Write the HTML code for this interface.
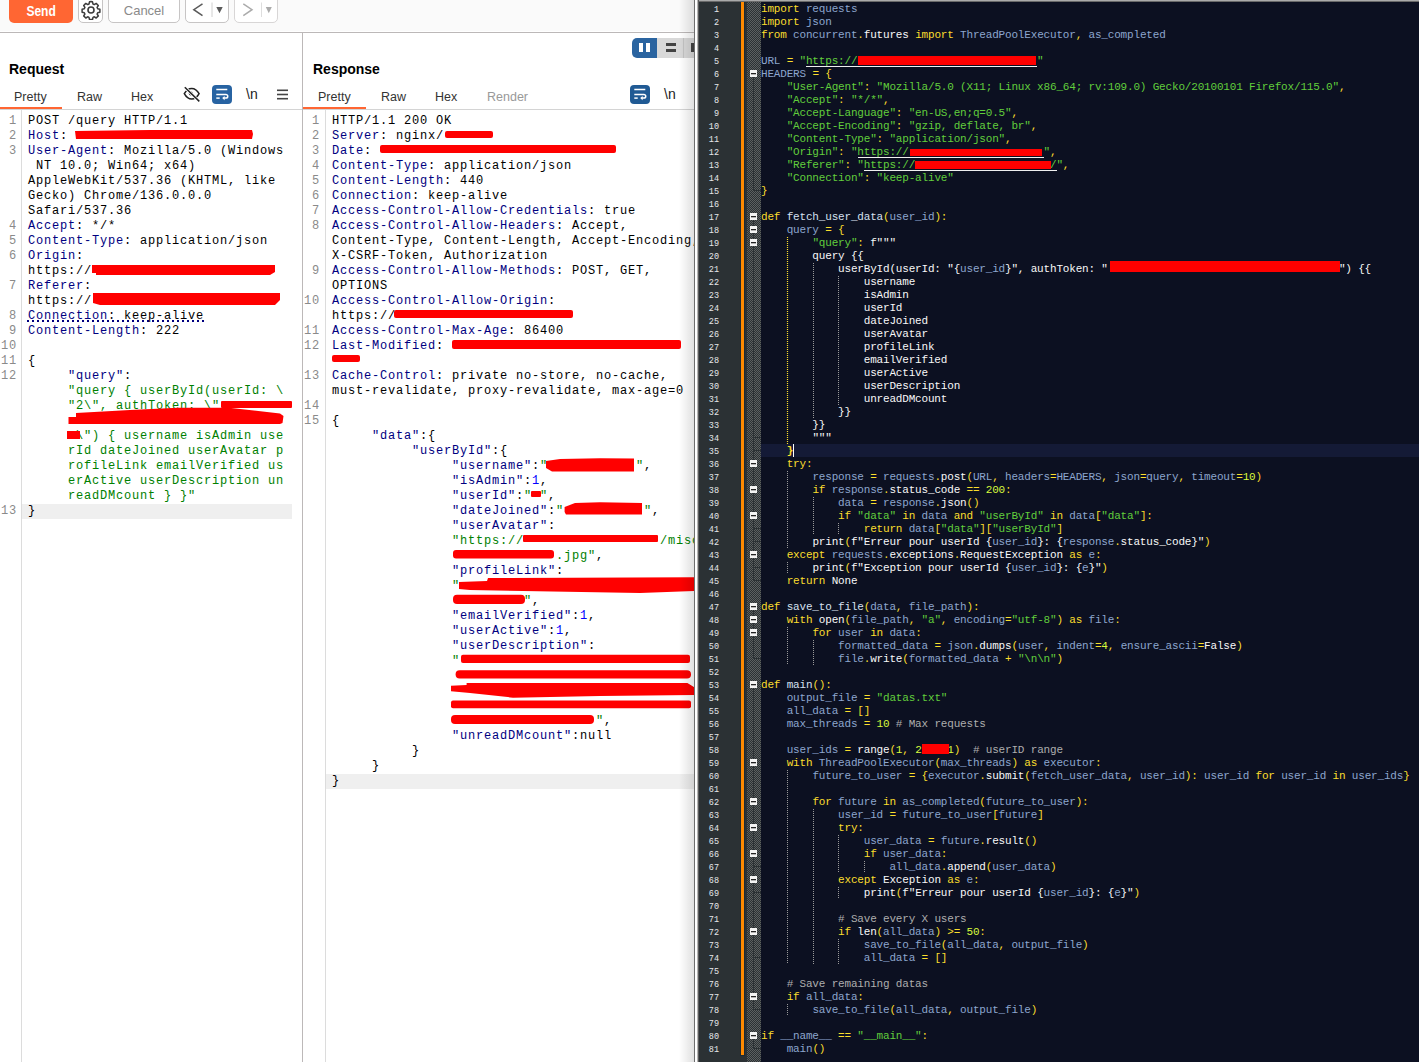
<!DOCTYPE html>
<html><head><meta charset="utf-8">
<style>
*{margin:0;padding:0;box-sizing:border-box}
html,body{width:1419px;height:1062px;overflow:hidden;background:#fff;position:relative}
body{font-family:"Liberation Sans",sans-serif}
.a{position:absolute}
svg{display:block}
#tb{left:0;top:0;width:1419px;background:linear-gradient(#fafafa 0,#fafafa 31px,#fff 31px,#fff 32px);border-bottom:1px solid #bcb8b8;height:33px}
.btn{position:absolute;top:-6px;height:29px;border:1px solid #c7c5c5;border-radius:5px;background:#fff}
.send{left:9px;width:64px;background:#ff6633;border:none;color:#fff;font:bold 14px "Liberation Sans",sans-serif;text-align:center;line-height:35px}
.hd{font:bold 14px "Liberation Sans",sans-serif;color:#000}
.tab{font:12.5px "Liberation Sans",sans-serif;color:#333}
.ed{font:12px "Liberation Mono",monospace;letter-spacing:0.8px;line-height:15px;white-space:pre;color:#000}
.ln{font:12px "Liberation Mono",monospace;letter-spacing:0.8px;line-height:15px;white-space:pre;color:#8a8a8a;text-align:right;width:16px}
.K{color:#000080}.G{color:#008000}.N{color:#0000ff}
.red{position:absolute;background:#ff0000;border-radius:3px}
#np{left:694px;top:0;width:725px;height:1062px;background:#0c1021;overflow:hidden}
.code{font:11px "Liberation Mono",monospace;letter-spacing:-0.18px;line-height:13px;white-space:pre;color:#f8f8f8}
.code b{font-weight:normal}
b.k{color:#fbde2d}b.i{color:#8da6ce}b.s{color:#61ce3c}b.n{color:#d8fa3c}b.w{color:#f8f8f8}b.c{color:#aeaeae}b.d{color:#d6e0f0}
.nln{font:8.5px "Liberation Mono",monospace;line-height:13px;white-space:pre;color:#e6e8ea;text-align:right}
</style></head><body>
<!-- toolbar -->
<div id="tb" class="a">
  <div class="btn send"><span style="display:inline-block;transform:scaleX(0.86)">Send</span></div>
  <div class="btn" style="left:78px;width:25px"><svg class="a" style="left:2px;top:5px" width="20" height="20" viewBox="0 0 20 20"><path d="M10 1.6l1.5.2.5 2.2 1.3.6 1.9-1.2 2.1 2.1-1.2 1.9.6 1.3 2.2.5v3l-2.2.5-.6 1.3 1.2 1.9-2.1 2.1-1.9-1.2-1.3.6-.5 2.2h-3l-.5-2.2-1.3-.6-1.9 1.2-2.1-2.1 1.2-1.9-.6-1.3-2.2-.5v-3l2.2-.5.6-1.3-1.2-1.9 2.1-2.1 1.9 1.2 1.3-.6.5-2.2z" fill="none" stroke="#3c3c3c" stroke-width="1.5" stroke-linejoin="round"/><circle cx="10" cy="10" r="3" fill="none" stroke="#3c3c3c" stroke-width="1.6"/></svg></div>
  <div class="btn" style="left:108px;width:72px;text-align:center;font:13px 'Liberation Sans',sans-serif;color:#8a8a8a;line-height:31px">Cancel</div>
  <div class="btn" style="left:185px;width:44px"><svg class="a" style="left:0;top:6px" width="44" height="18"><path d="M16.5 2.8L7.8 8.7 16.5 14.6" fill="none" stroke="#5a5a5a" stroke-width="1.5"/><line x1="26" y1="1.5" x2="26" y2="16" stroke="#d0d0d0" stroke-width="1"/><path d="M30.3 6h6.4l-3.2 6.2z" fill="#5a5a5a"/></svg></div>
  <div class="btn" style="left:234px;width:44px;border-color:#d8d6d6"><svg class="a" style="left:0;top:6px" width="44" height="18"><path d="M8.3 2.8L17 8.7 8.3 14.6" fill="none" stroke="#ababab" stroke-width="1.5"/><line x1="26.5" y1="1.5" x2="26.5" y2="16" stroke="#dedede" stroke-width="1"/><path d="M30.8 6h6l-3 6.2z" fill="#ababab"/></svg></div>
</div>
<!-- request -->
<div class="a hd" style="left:9px;top:61px">Request</div>
<div class="a tab" style="left:14px;top:90px">Pretty</div>
<div class="a tab" style="left:77px;top:90px">Raw</div>
<div class="a tab" style="left:131px;top:90px">Hex</div>
<div class="a" style="left:183px;top:86px"><svg width="17" height="16" viewBox="0 0 17 16"><path d="M1.3 7.7C3.5 3.7 6 2.4 8.7 2.4S13.9 3.7 16.1 7.7C13.9 11.7 11.4 13.1 8.7 13.1S3.5 11.7 1.3 7.7z" fill="none" stroke="#222" stroke-width="1.5"/><circle cx="7.8" cy="7.6" r="2" fill="#222"/><line x1="1.8" y1="1.3" x2="16.3" y2="15.4" stroke="#fff" stroke-width="3"/><line x1="1.8" y1="1.3" x2="16.3" y2="15.4" stroke="#222" stroke-width="1.5"/></svg></div>
<div class="a" style="left:212px;top:85px"><svg width="20" height="19" viewBox="0 0 20 19"><rect x="0" y="0" width="20" height="19" rx="4" fill="#2763a2"/><path d="M4.3 4.5h11M4.3 9.4h9.6a1.85 1.85 0 0 1 0 3.7H12" fill="none" stroke="#fff" stroke-width="1.5"/><path d="M4.3 13.1h3.4" stroke="#fff" stroke-width="1.5"/><path d="M12.6 11l-2.4 2.1 2.4 2.1z" fill="#fff"/></svg></div>
<div class="a" style="left:246px;top:86px;font:14px 'Liberation Sans',sans-serif;color:#222">\n</div>
<div class="a" style="left:277px;top:89px"><svg width="11" height="11"><rect x="0" y="0.5" width="11" height="1.6" fill="#444"/><rect x="0" y="4.7" width="11" height="1.6" fill="#444"/><rect x="0" y="8.9" width="11" height="1.6" fill="#444"/></svg></div>
<div class="a" style="left:0;top:107px;width:62px;height:2px;background:#ff6633"></div>
<div class="a" style="left:0;top:109px;width:302px;height:1px;background:#d4d4d4"></div>
<div class="a" style="left:21px;top:110px;width:1px;height:952px;background:#dcdcdc"></div>
<div class="a" style="left:22px;top:504px;width:270px;height:15px;background:#efefef"></div>
<div class="a" style="left:27px;top:320px;width:179px;height:2px;background:repeating-linear-gradient(to right,#000080 0,#000080 2px,transparent 2px,transparent 5px)"></div>
<div class="a ln" style="left:1px;top:113.6px">1
2
3




4
5
6

7

8
9
10
11
12








13</div>
<div class="a ed" style="left:28px;top:113.6px">POST /query HTTP/1.1
<span class=K>Host</span>:
<span class=K>User-Agent</span>: Mozilla/5.0 (Windows
 NT 10.0; Win64; x64)
AppleWebKit/537.36 (KHTML, like
Gecko) Chrome/136.0.0.0
Safari/537.36
<span class=K>Accept</span>: */*
<span class=K>Content-Type</span>: application/json
<span class=K>Origin</span>:
https://
<span class=K>Referer</span>:
https://
<span class=K>Connection</span>: keep-alive
<span class=K>Content-Length</span>: 222

{
     <span class=K>"query"</span>:
     <span class=G>"query { userById(userId: \</span>
     <span class=G>"2\", authToken: \"</span>

     <span class=G> \") { username isAdmin use</span>
     <span class=G>rId dateJoined userAvatar p</span>
     <span class=G>rofileLink emailVerified us</span>
     <span class=G>erActive userDescription un</span>
     <span class=G>readDMcount } }"</span>
}</div>
<div class="a" style="left:302px;top:33px;width:1px;height:1029px;background:#bcb8b8"></div>
<!-- response -->
<div class="a hd" style="left:313px;top:61px">Response</div>
<div class="a tab" style="left:318px;top:90px">Pretty</div>
<div class="a tab" style="left:381px;top:90px">Raw</div>
<div class="a tab" style="left:435px;top:90px">Hex</div>
<div class="a tab" style="left:487px;top:90px;color:#999">Render</div>
<div class="a" style="left:632px;top:38px;width:25px;height:20px;background:#2a64a0;border-radius:5px 0 0 5px"></div>
<div class="a" style="left:639px;top:43px;width:4px;height:9px;background:#fff"></div>
<div class="a" style="left:646px;top:43px;width:4px;height:9px;background:#fff"></div>
<div class="a" style="left:657px;top:38px;width:40px;height:20px;background:#d9d9d9"></div>
<div class="a" style="left:683px;top:38px;width:1px;height:20px;background:#c4c4c4"></div>
<div class="a" style="left:666px;top:43px;width:10px;height:3px;background:#444"></div>
<div class="a" style="left:666px;top:49px;width:10px;height:3px;background:#444"></div>
<div class="a" style="left:691px;top:43px;width:4px;height:9px;background:#444"></div>
<div class="a" style="left:630px;top:85px"><svg width="20" height="19" viewBox="0 0 20 19"><rect x="0" y="0" width="20" height="19" rx="4" fill="#205a94"/><path d="M4.3 4.5h11M4.3 9.4h9.6a1.85 1.85 0 0 1 0 3.7H12" fill="none" stroke="#fff" stroke-width="1.5"/><path d="M4.3 13.1h3.4" stroke="#fff" stroke-width="1.5"/><path d="M12.6 11l-2.4 2.1 2.4 2.1z" fill="#fff"/></svg></div>
<div class="a" style="left:664px;top:86px;font:14px 'Liberation Sans',sans-serif;color:#222">\n</div>
<div class="a" style="left:303px;top:107px;width:63px;height:2px;background:#ff6633"></div>
<div class="a" style="left:303px;top:109px;width:400px;height:1px;background:#d4d4d4"></div>
<div class="a" style="left:325px;top:110px;width:1px;height:952px;background:#dcdcdc"></div>
<div class="a" style="left:326px;top:774px;width:380px;height:15px;background:#efefef"></div>
<div class="a ln" style="left:304px;top:113.6px">1
2
3
4
5
6
7
8


9

10

11
12

13

14
15























</div>
<div class="a ed" style="left:332px;top:113.6px">HTTP/1.1 200 OK
<span class=K>Server</span>: nginx/
<span class=K>Date</span>:
<span class=K>Content-Type</span>: application/json
<span class=K>Content-Length</span>: 440
<span class=K>Connection</span>: keep-alive
<span class=K>Access-Control-Allow-Credentials</span>: true
<span class=K>Access-Control-Allow-Headers</span>: Accept,
Content-Type, Content-Length, Accept-Encoding,
X-CSRF-Token, Authorization
<span class=K>Access-Control-Allow-Methods</span>: POST, GET,
OPTIONS
<span class=K>Access-Control-Allow-Origin</span>:
https://
<span class=K>Access-Control-Max-Age</span>: 86400
<span class=K>Last-Modified</span>:

<span class=K>Cache-Control</span>: private no-store, no-cache,
must-revalidate, proxy-revalidate, max-age=0

{
     <span class=K>"data"</span>:{
          <span class=K>"userById"</span>:{
               <span class=K>"username"</span>:<span class=G>"           "</span>,
               <span class=K>"isAdmin"</span>:<span class=N>1</span>,
               <span class=K>"userId"</span>:<span class=G>" "</span>,
               <span class=K>"dateJoined"</span>:<span class=G>"          "</span>,
               <span class=K>"userAvatar"</span>:
               <span class=G>"https://                 /misc</span>
               <span class=G>             .jpg"</span>,
               <span class=K>"profileLink"</span>:
               <span class=G>"</span>
               <span class=G>         "</span>,
               <span class=K>"emailVerified"</span>:<span class=N>1</span>,
               <span class=K>"userActive"</span>:<span class=N>1</span>,
               <span class=K>"userDescription"</span>:
               <span class=G>"</span>



               <span class=G>                  "</span>,
               <span class=K>"unreadDMcount"</span>:null
          }
     }
}</div>
<svg class="a" style="left:0;top:0" width="700" height="1062" fill="#ff0000"><path d="M75,131 L150,130 L252,130 L253,134 L252,139 L180,139 L76,139Z"/><path d="M92,265 L275,265 L275,272 L270,275 L96,275 L96,273 L92,273Z"/><path d="M93,293 L280,293 L280,300 L275,305 L100,305 L93,303Z"/><rect x="221" y="401" width="71" height="7" rx="1"/><path d="M68.5,417 L76,417 L76,413 L130,410 L178,407.7 L229,407.7 L280,413.5 L283.5,416 L282.5,423 L280,424 L68.5,424Z"/><rect x="67" y="431" width="13" height="8" rx="0"/><rect x="445" y="131" width="48" height="7" rx="2"/><rect x="380" y="145" width="236" height="8" rx="2"/><rect x="394" y="310" width="179" height="8" rx="2"/><rect x="452" y="340" width="229" height="9" rx="2"/><rect x="332" y="355" width="28" height="7" rx="2"/><path d="M546,461 L560,459 L600,458.2 L634,458.5 L634,471.5 L552,471.5 L546,468Z"/><rect x="531" y="491" width="10" height="6" rx="1"/><path d="M564.6,507 L575,503 L600,502.2 L642,503 L642,514.5 L566,514.5 L564.6,512Z"/><rect x="523" y="535" width="135" height="7" rx="1"/><rect x="453" y="550" width="101" height="8.5" rx="3"/><path d="M459,582 L487,581 L488,578 L694,577.3 L694,591 L640,592.9 L470,590 L459,589Z"/><rect x="453" y="594.7" width="72" height="9.199999999999932" rx="4"/><rect x="461" y="654.7" width="229" height="8.299999999999955" rx="2"/><rect x="455.6" y="670.2" width="235.39999999999998" height="8.299999999999955" rx="4"/><path d="M451,685.8 L466.6,685 L466.6,683 L687.4,683 L694.7,687.6 L694.7,695 L600,696 L513,697.7 L470,693 L451,691.3Z"/><rect x="451" y="700.5" width="240" height="7.7000000000000455" rx="2"/><rect x="451" y="715.1" width="143" height="8.799999999999955" rx="4"/></svg>
<div class="a" style="left:679px;top:0;width:15px;height:1062px;background:linear-gradient(to right,rgba(0,0,0,0),rgba(0,0,0,0.12))"></div>
<!-- notepad++ -->
<div id="np" class="a">
<div class="a" style="left:0;top:0;width:1px;height:1062px;background:#6e6e6e"></div>
<div class="a" style="left:1px;top:0;width:2px;height:1062px;background:#fff"></div>
<div class="a" style="left:3px;top:0;width:1px;height:1062px;background:#b4b4b4"></div>
<div class="a" style="left:4px;top:0;width:1px;height:1062px;background:#5a5a5a"></div>
<div class="a" style="left:5px;top:0;width:62px;height:1062px;background:#2b3134"></div>
<div class="a" style="left:46px;top:2px;width:1px;height:1054px;background:#1d2a33"></div>
<div class="a" style="left:47px;top:2px;width:3px;height:1053px;background:#ff8a00"></div>
<div class="a" style="left:50px;top:2px;width:1px;height:1054px;background:#1d2a33"></div>
<div class="a" style="left:47px;top:1055px;width:3px;height:1px;background:#1d2a33"></div>
<div class="a" style="left:53px;top:2px;width:14px;height:1060px;background:repeating-conic-gradient(#5c6060 0 25%,#2b3134 0 50%) 0 0/2px 2px"></div>
<svg class="a" style="left:53px;top:0" width="14" height="1062"><rect x="6" y="77" width="1" height="114" fill="#2b3134"/><rect x="7" y="190" width="7" height="1" fill="#2b3134"/><rect x="6" y="220" width="1" height="361" fill="#2b3134"/><rect x="7" y="580" width="7" height="1" fill="#2b3134"/><rect x="6" y="233" width="1" height="218" fill="#2b3134"/><rect x="7" y="450" width="7" height="1" fill="#2b3134"/><rect x="6" y="246" width="1" height="192" fill="#2b3134"/><rect x="7" y="437" width="7" height="1" fill="#2b3134"/><rect x="6" y="467" width="1" height="75" fill="#2b3134"/><rect x="7" y="541" width="7" height="1" fill="#2b3134"/><rect x="6" y="493" width="1" height="36" fill="#2b3134"/><rect x="7" y="528" width="7" height="1" fill="#2b3134"/><rect x="6" y="519" width="1" height="10" fill="#2b3134"/><rect x="7" y="528" width="7" height="1" fill="#2b3134"/><rect x="6" y="558" width="1" height="10" fill="#2b3134"/><rect x="7" y="567" width="7" height="1" fill="#2b3134"/><rect x="6" y="610" width="1" height="49" fill="#2b3134"/><rect x="7" y="658" width="7" height="1" fill="#2b3134"/><rect x="6" y="623" width="1" height="36" fill="#2b3134"/><rect x="7" y="658" width="7" height="1" fill="#2b3134"/><rect x="6" y="636" width="1" height="23" fill="#2b3134"/><rect x="7" y="658" width="7" height="1" fill="#2b3134"/><rect x="6" y="688" width="1" height="322" fill="#2b3134"/><rect x="7" y="1009" width="7" height="1" fill="#2b3134"/><rect x="6" y="766" width="1" height="192" fill="#2b3134"/><rect x="7" y="957" width="7" height="1" fill="#2b3134"/><rect x="6" y="805" width="1" height="153" fill="#2b3134"/><rect x="7" y="957" width="7" height="1" fill="#2b3134"/><rect x="6" y="831" width="1" height="36" fill="#2b3134"/><rect x="7" y="866" width="7" height="1" fill="#2b3134"/><rect x="6" y="857" width="1" height="10" fill="#2b3134"/><rect x="7" y="866" width="7" height="1" fill="#2b3134"/><rect x="6" y="883" width="1" height="10" fill="#2b3134"/><rect x="7" y="892" width="7" height="1" fill="#2b3134"/><rect x="6" y="935" width="1" height="23" fill="#2b3134"/><rect x="7" y="957" width="7" height="1" fill="#2b3134"/><rect x="6" y="1000" width="1" height="10" fill="#2b3134"/><rect x="7" y="1009" width="7" height="1" fill="#2b3134"/><rect x="6" y="1039" width="1" height="10" fill="#2b3134"/><rect x="7" y="1048" width="7" height="1" fill="#2b3134"/><rect x="3" y="70" width="7" height="7" fill="#f4f4f4"/><rect x="4" y="73" width="5" height="1.3" fill="#222"/><rect x="3" y="213" width="7" height="7" fill="#f4f4f4"/><rect x="4" y="216" width="5" height="1.3" fill="#222"/><rect x="3" y="226" width="7" height="7" fill="#f4f4f4"/><rect x="4" y="229" width="5" height="1.3" fill="#222"/><rect x="3" y="239" width="7" height="7" fill="#f4f4f4"/><rect x="4" y="242" width="5" height="1.3" fill="#222"/><rect x="3" y="460" width="7" height="7" fill="#f4f4f4"/><rect x="4" y="463" width="5" height="1.3" fill="#222"/><rect x="3" y="486" width="7" height="7" fill="#f4f4f4"/><rect x="4" y="489" width="5" height="1.3" fill="#222"/><rect x="3" y="512" width="7" height="7" fill="#f4f4f4"/><rect x="4" y="515" width="5" height="1.3" fill="#222"/><rect x="3" y="551" width="7" height="7" fill="#f4f4f4"/><rect x="4" y="554" width="5" height="1.3" fill="#222"/><rect x="3" y="603" width="7" height="7" fill="#f4f4f4"/><rect x="4" y="606" width="5" height="1.3" fill="#222"/><rect x="3" y="616" width="7" height="7" fill="#f4f4f4"/><rect x="4" y="619" width="5" height="1.3" fill="#222"/><rect x="3" y="629" width="7" height="7" fill="#f4f4f4"/><rect x="4" y="632" width="5" height="1.3" fill="#222"/><rect x="3" y="681" width="7" height="7" fill="#f4f4f4"/><rect x="4" y="684" width="5" height="1.3" fill="#222"/><rect x="3" y="759" width="7" height="7" fill="#f4f4f4"/><rect x="4" y="762" width="5" height="1.3" fill="#222"/><rect x="3" y="798" width="7" height="7" fill="#f4f4f4"/><rect x="4" y="801" width="5" height="1.3" fill="#222"/><rect x="3" y="824" width="7" height="7" fill="#f4f4f4"/><rect x="4" y="827" width="5" height="1.3" fill="#222"/><rect x="3" y="850" width="7" height="7" fill="#f4f4f4"/><rect x="4" y="853" width="5" height="1.3" fill="#222"/><rect x="3" y="876" width="7" height="7" fill="#f4f4f4"/><rect x="4" y="879" width="5" height="1.3" fill="#222"/><rect x="3" y="928" width="7" height="7" fill="#f4f4f4"/><rect x="4" y="931" width="5" height="1.3" fill="#222"/><rect x="3" y="993" width="7" height="7" fill="#f4f4f4"/><rect x="4" y="996" width="5" height="1.3" fill="#222"/><rect x="3" y="1032" width="7" height="7" fill="#f4f4f4"/><rect x="4" y="1035" width="5" height="1.3" fill="#222"/></svg>
<div class="a" style="left:5px;top:0;width:720px;height:1px;background:#aaa"></div>
<div class="a" style="left:5px;top:1px;width:720px;height:1px;background:#6a6a6a"></div>
<div class="a" style="left:67px;top:444px;width:700px;height:13px;background:#141a36"></div>
<svg class="a" style="left:0;top:0" width="725" height="1062"><line x1="93.5" y1="236" x2="93.5" y2="444" stroke="#9a9a9a" stroke-width="1" stroke-dasharray="1 1" stroke-dashoffset="1"/><line x1="93.5" y1="470" x2="93.5" y2="548" stroke="#9a9a9a" stroke-width="1" stroke-dasharray="1 1" stroke-dashoffset="1"/><line x1="93.5" y1="561" x2="93.5" y2="574" stroke="#9a9a9a" stroke-width="1" stroke-dasharray="1 1" stroke-dashoffset="1"/><line x1="93.5" y1="626" x2="93.5" y2="665" stroke="#9a9a9a" stroke-width="1" stroke-dasharray="1 1" stroke-dashoffset="1"/><line x1="93.5" y1="769" x2="93.5" y2="964" stroke="#9a9a9a" stroke-width="1" stroke-dasharray="1 1" stroke-dashoffset="1"/><line x1="93.5" y1="1003" x2="93.5" y2="1016" stroke="#9a9a9a" stroke-width="1" stroke-dasharray="1 1" stroke-dashoffset="1"/><line x1="119.5" y1="262" x2="119.5" y2="418" stroke="#9a9a9a" stroke-width="1" stroke-dasharray="1 1" stroke-dashoffset="1"/><line x1="119.5" y1="496" x2="119.5" y2="535" stroke="#9a9a9a" stroke-width="1" stroke-dasharray="1 1" stroke-dashoffset="1"/><line x1="119.5" y1="639" x2="119.5" y2="665" stroke="#9a9a9a" stroke-width="1" stroke-dasharray="1 1" stroke-dashoffset="1"/><line x1="119.5" y1="808" x2="119.5" y2="964" stroke="#9a9a9a" stroke-width="1" stroke-dasharray="1 1" stroke-dashoffset="1"/><line x1="144.5" y1="275" x2="144.5" y2="405" stroke="#9a9a9a" stroke-width="1" stroke-dasharray="1 1" stroke-dashoffset="1"/><line x1="144.5" y1="522" x2="144.5" y2="535" stroke="#9a9a9a" stroke-width="1" stroke-dasharray="1 1" stroke-dashoffset="1"/><line x1="144.5" y1="834" x2="144.5" y2="873" stroke="#9a9a9a" stroke-width="1" stroke-dasharray="1 1" stroke-dashoffset="1"/><line x1="144.5" y1="886" x2="144.5" y2="899" stroke="#9a9a9a" stroke-width="1" stroke-dasharray="1 1" stroke-dashoffset="1"/><line x1="144.5" y1="938" x2="144.5" y2="964" stroke="#9a9a9a" stroke-width="1" stroke-dasharray="1 1" stroke-dashoffset="1"/><line x1="170.5" y1="860" x2="170.5" y2="873" stroke="#9a9a9a" stroke-width="1" stroke-dasharray="1 1" stroke-dashoffset="1"/><line x1="93.5" y1="236" x2="93.5" y2="444" stroke="#fbde2d" stroke-width="1.2" stroke-dasharray="1 1" stroke-dashoffset="1"/></svg>
<div class="a" style="left:112.2px;top:66px;width:231.1px;height:1px;background:#f0f0f0"></div>
<div class="a" style="left:163.6px;top:157px;width:186.2px;height:1px;background:#f0f0f0"></div>
<div class="a" style="left:170.0px;top:170px;width:192.6px;height:1px;background:#f0f0f0"></div>
<div class="a nln" style="left:5px;top:4px;width:20px">1
2
3
4
5
6
7
8
9
10
11
12
13
14
15
16
17
18
19
20
21
22
23
24
25
26
27
28
29
30
31
32
33
34
35
36
37
38
39
40
41
42
43
44
45
46
47
48
49
50
51
52
53
54
55
56
57
58
59
60
61
62
63
64
65
66
67
68
69
70
71
72
73
74
75
76
77
78
79
80
81</div>
<div class="a code" style="left:67px;top:2.8px"><b class=k>import</b> <b class=i>requests</b>
<b class=k>import</b> <b class=i>json</b>
<b class=k>from</b> <b class=i>concurrent</b><b class=k>.</b><b class=w>futures</b> <b class=k>import</b> <b class=i>ThreadPoolExecutor</b><b class=k>,</b> <b class=i>as_completed</b>

<b class=i>URL</b> <b class=k>=</b> <b class=s>"https://                            "</b>
<b class=i>HEADERS</b> <b class=k>=</b> <b class=k>{</b>
    <b class=s>"User-Agent"</b><b class=k>:</b> <b class=s>"Mozilla/5.0 (X11; Linux x86_64; rv:109.0) Gecko/20100101 Firefox/115.0"</b><b class=k>,</b>
    <b class=s>"Accept"</b><b class=k>:</b> <b class=s>"*/*"</b><b class=k>,</b>
    <b class=s>"Accept-Language"</b><b class=k>:</b> <b class=s>"en-US,en;q=0.5"</b><b class=k>,</b>
    <b class=s>"Accept-Encoding"</b><b class=k>:</b> <b class=s>"gzip, deflate, br"</b><b class=k>,</b>
    <b class=s>"Content-Type"</b><b class=k>:</b> <b class=s>"application/json"</b><b class=k>,</b>
    <b class=s>"Origin"</b><b class=k>:</b> <b class=s>"https://                     "</b><b class=k>,</b>
    <b class=s>"Referer"</b><b class=k>:</b> <b class=s>"https://                     /"</b><b class=k>,</b>
    <b class=s>"Connection"</b><b class=k>:</b> <b class=s>"keep-alive"</b>
<b class=k>}</b>

<b class=k>def</b> <b class=d>fetch_user_data</b><b class=k>(</b><b class=i>user_id</b><b class=k>)</b><b class=k>:</b>
    <b class=i>query</b> <b class=k>=</b> <b class=k>{</b>
        <b class=s>"query"</b><b class=k>:</b> <b class=w>f"""</b>
<b class=w>        query {{</b>
<b class=w>            userById(userId: "{</b><b class=i>user_id</b><b class=w>}", authToken: "                                    ") {{</b>
<b class=w>                username</b>
<b class=w>                isAdmin</b>
<b class=w>                userId</b>
<b class=w>                dateJoined</b>
<b class=w>                userAvatar</b>
<b class=w>                profileLink</b>
<b class=w>                emailVerified</b>
<b class=w>                userActive</b>
<b class=w>                userDescription</b>
<b class=w>                unreadDMcount</b>
<b class=w>            }}</b>
<b class=w>        }}</b>
        <b class=w>"""</b>
    <b class=k style="font-weight:bold">}</b>
    <b class=k>try</b><b class=k>:</b>
        <b class=i>response</b> <b class=k>=</b> <b class=i>requests</b><b class=k>.</b><b class=w>post</b><b class=k>(</b><b class=i>URL</b><b class=k>,</b> <b class=i>headers</b><b class=k>=</b><b class=i>HEADERS</b><b class=k>,</b> <b class=i>json</b><b class=k>=</b><b class=i>query</b><b class=k>,</b> <b class=i>timeout</b><b class=k>=</b><b class=n>10</b><b class=k>)</b>
        <b class=k>if</b> <b class=i>response</b><b class=k>.</b><b class=w>status_code</b> <b class=k>=</b><b class=k>=</b> <b class=n>200</b><b class=k>:</b>
            <b class=i>data</b> <b class=k>=</b> <b class=i>response</b><b class=k>.</b><b class=w>json</b><b class=k>(</b><b class=k>)</b>
            <b class=k>if</b> <b class=s>"data"</b> <b class=k>in</b> <b class=i>data</b> <b class=k>and</b> <b class=s>"userById"</b> <b class=k>in</b> <b class=i>data</b><b class=k>[</b><b class=s>"data"</b><b class=k>]</b><b class=k>:</b>
                <b class=k>return</b> <b class=i>data</b><b class=k>[</b><b class=s>"data"</b><b class=k>]</b><b class=k>[</b><b class=s>"userById"</b><b class=k>]</b>
        <b class=w>print</b><b class=k>(</b><b class=w>f"</b><b class=w>Erreur pour userId {</b><b class=i>user_id</b><b class=w>}: {</b><b class=i>response</b><b class=k>.</b><b class=w>status_code</b><b class=w>}</b><b class=w>"</b><b class=k>)</b>
    <b class=k>except</b> <b class=i>requests</b><b class=k>.</b><b class=w>exceptions</b><b class=k>.</b><b class=w>RequestException</b> <b class=k>as</b> <b class=i>e</b><b class=k>:</b>
        <b class=w>print</b><b class=k>(</b><b class=w>f"</b><b class=w>Exception pour userId {</b><b class=i>user_id</b><b class=w>}: {</b><b class=i>e</b><b class=w>}</b><b class=w>"</b><b class=k>)</b>
    <b class=k>return</b> <b class=w>None</b>

<b class=k>def</b> <b class=d>save_to_file</b><b class=k>(</b><b class=i>data</b><b class=k>,</b> <b class=i>file_path</b><b class=k>)</b><b class=k>:</b>
    <b class=k>with</b> <b class=w>open</b><b class=k>(</b><b class=i>file_path</b><b class=k>,</b> <b class=s>"a"</b><b class=k>,</b> <b class=i>encoding</b><b class=k>=</b><b class=s>"utf-8"</b><b class=k>)</b> <b class=k>as</b> <b class=i>file</b><b class=k>:</b>
        <b class=k>for</b> <b class=i>user</b> <b class=k>in</b> <b class=i>data</b><b class=k>:</b>
            <b class=i>formatted_data</b> <b class=k>=</b> <b class=i>json</b><b class=k>.</b><b class=w>dumps</b><b class=k>(</b><b class=i>user</b><b class=k>,</b> <b class=i>indent</b><b class=k>=</b><b class=n>4</b><b class=k>,</b> <b class=i>ensure_ascii</b><b class=k>=</b><b class=w>False</b><b class=k>)</b>
            <b class=i>file</b><b class=k>.</b><b class=w>write</b><b class=k>(</b><b class=i>formatted_data</b> <b class=k>+</b> <b class=s>"\n\n"</b><b class=k>)</b>

<b class=k>def</b> <b class=d>main</b><b class=k>(</b><b class=k>)</b><b class=k>:</b>
    <b class=i>output_file</b> <b class=k>=</b> <b class=s>"datas.txt"</b>
    <b class=i>all_data</b> <b class=k>=</b> <b class=k>[</b><b class=k>]</b>
    <b class=i>max_threads</b> <b class=k>=</b> <b class=n>10</b> <b class=c># Max requests</b>

    <b class=i>user_ids</b> <b class=k>=</b> <b class=w>range</b><b class=k>(</b><b class=n>1</b><b class=k>,</b> <b class=n>2</b>    <b class=n>1</b><b class=k>)</b>  <b class=c># userID range</b>
    <b class=k>with</b> <b class=i>ThreadPoolExecutor</b><b class=k>(</b><b class=i>max_threads</b><b class=k>)</b> <b class=k>as</b> <b class=i>executor</b><b class=k>:</b>
        <b class=i>future_to_user</b> <b class=k>=</b> <b class=k>{</b><b class=i>executor</b><b class=k>.</b><b class=w>submit</b><b class=k>(</b><b class=i>fetch_user_data</b><b class=k>,</b> <b class=i>user_id</b><b class=k>)</b><b class=k>:</b> <b class=i>user_id</b> <b class=k>for</b> <b class=i>user_id</b> <b class=k>in</b> <b class=i>user_ids</b><b class=k>}</b>

        <b class=k>for</b> <b class=i>future</b> <b class=k>in</b> <b class=i>as_completed</b><b class=k>(</b><b class=i>future_to_user</b><b class=k>)</b><b class=k>:</b>
            <b class=i>user_id</b> <b class=k>=</b> <b class=i>future_to_user</b><b class=k>[</b><b class=i>future</b><b class=k>]</b>
            <b class=k>try</b><b class=k>:</b>
                <b class=i>user_data</b> <b class=k>=</b> <b class=i>future</b><b class=k>.</b><b class=w>result</b><b class=k>(</b><b class=k>)</b>
                <b class=k>if</b> <b class=i>user_data</b><b class=k>:</b>
                    <b class=i>all_data</b><b class=k>.</b><b class=w>append</b><b class=k>(</b><b class=i>user_data</b><b class=k>)</b>
            <b class=k>except</b> <b class=w>Exception</b> <b class=k>as</b> <b class=i>e</b><b class=k>:</b>
                <b class=w>print</b><b class=k>(</b><b class=w>f"</b><b class=w>Erreur pour userId {</b><b class=i>user_id</b><b class=w>}: {</b><b class=i>e</b><b class=w>}</b><b class=w>"</b><b class=k>)</b>

            <b class=c># Save every X users</b>
            <b class=k>if</b> <b class=w>len</b><b class=k>(</b><b class=i>all_data</b><b class=k>)</b> <b class=k>&gt;</b><b class=k>=</b> <b class=n>50</b><b class=k>:</b>
                <b class=i>save_to_file</b><b class=k>(</b><b class=i>all_data</b><b class=k>,</b> <b class=i>output_file</b><b class=k>)</b>
                <b class=i>all_data</b> <b class=k>=</b> <b class=k>[</b><b class=k>]</b>

    <b class=c># Save remaining datas</b>
    <b class=k>if</b> <b class=i>all_data</b><b class=k>:</b>
        <b class=i>save_to_file</b><b class=k>(</b><b class=i>all_data</b><b class=k>,</b> <b class=i>output_file</b><b class=k>)</b>

<b class=k>if</b> <b class=i>__name__</b> <b class=k>=</b><b class=k>=</b> <b class=s>"__main__"</b><b class=k>:</b>
    <b class=i>main</b><b class=k>(</b><b class=k>)</b></div>
<div class="a" style="left:99px;top:444px;width:1px;height:13px;background:#fff"></div>
<div class="a" style="left:164px;top:56px;width:178px;height:8.5px;background:#f00"></div>
<div class="a" style="left:216px;top:149px;width:132px;height:7px;background:#f00"></div>
<div class="a" style="left:220.5px;top:161px;width:136.5px;height:7.5px;background:#f00"></div>
<div class="a" style="left:415.5px;top:260.6px;width:230.0px;height:11.599999999999966px;background:#f00"></div>
<div class="a" style="left:228px;top:744px;width:27px;height:10px;background:#f00"></div>
</div>
</body></html>
